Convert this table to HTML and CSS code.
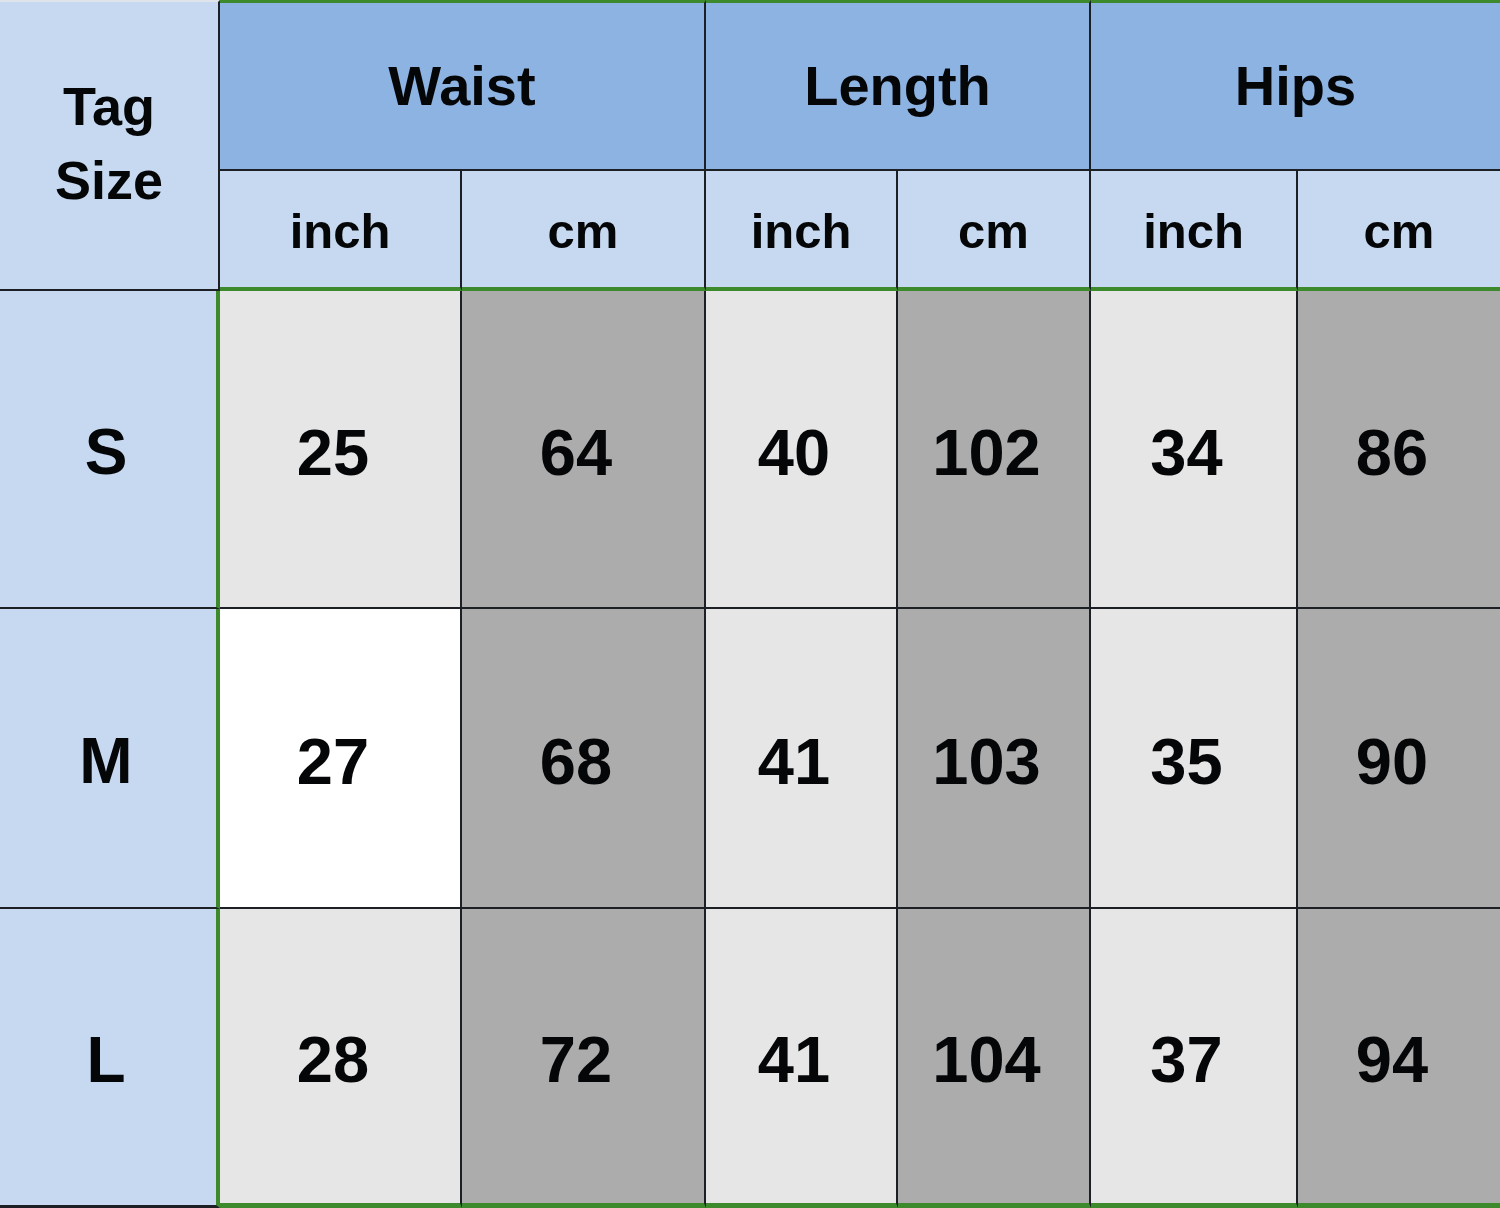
FILE: index.html
```html
<!DOCTYPE html>
<html>
<head>
<meta charset="utf-8">
<link rel="stylesheet" href="styles.css">
</head>
<body>
<div class="chart">
  <div class="cell tag">Tag<br>Size</div>
  <div class="cell group span2">Waist</div>
  <div class="cell group span2">Length</div>
  <div class="cell group span2 last">Hips</div>

  <div class="cell unit">inch</div>
  <div class="cell unit">cm</div>
  <div class="cell unit">inch</div>
  <div class="cell unit">cm</div>
  <div class="cell unit">inch</div>
  <div class="cell unit last">cm</div>

  <div class="cell size">S</div>
  <div class="cell num light">25</div>
  <div class="cell num dark">64</div>
  <div class="cell num light">40</div>
  <div class="cell num dark">102</div>
  <div class="cell num light">34</div>
  <div class="cell num dark last">86</div>

  <div class="cell size">M</div>
  <div class="cell num white">27</div>
  <div class="cell num dark">68</div>
  <div class="cell num light">41</div>
  <div class="cell num dark">103</div>
  <div class="cell num light">35</div>
  <div class="cell num dark last">90</div>

  <div class="cell size bottom">L</div>
  <div class="cell num light bottom">28</div>
  <div class="cell num dark bottom">72</div>
  <div class="cell num light bottom">41</div>
  <div class="cell num dark bottom">104</div>
  <div class="cell num light bottom">37</div>
  <div class="cell num dark bottom last">94</div>
</div>
</body>
</html>
```

FILE: styles.css
```css
html, body {
  margin: 0;
  padding: 0;
  background: #ffffff;
}

.chart {
  width: 1500px;
  height: 1208px;
  display: grid;
  grid-template-columns: 220px 242px 244px 192px 193px 207px 202px;
  grid-template-rows: 171px 120px 318px 300px 299px;
  font-family: "Liberation Sans", Arial, sans-serif;
  font-weight: bold;
  color: #050608;
  overflow: hidden;
}

.cell {
  box-sizing: border-box;
  display: flex;
  align-items: center;
  justify-content: center;
  text-align: center;
  border-right: 2px solid #1c1f24;
  border-bottom: 2px solid #1c1f24;
}

.cell.last {
  border-right: none;
}

.tag {
  grid-row: 1 / 3;
  grid-column: 1;
  background: #c6d9f0;
  font-size: 54px;
  line-height: 74px;
  border-top: 2px solid #dfe4ea;
  padding-bottom: 6px;
}

.group {
  background: #8db3e2;
  font-size: 56px;
  border-top: 3px solid #3d8a2d;
  padding-bottom: 2px;
}

.span2 {
  grid-column: span 2;
}

.unit {
  background: #c6d9f0;
  font-size: 49px;
  border-bottom: 4px solid #3d8a2d;
  padding-top: 4px;
}

.size {
  background: #c6d9f0;
  font-size: 64px;
  border-right: 4px solid #3d8a2d;
  padding-right: 4px;
  padding-top: 6px;
}

.num {
  font-size: 65px;
  padding-right: 14px;
  padding-top: 6px;
}

.light {
  background: #e6e6e6;
}

.dark {
  background: #acacac;
}

.white {
  background: #ffffff;
}

.num.bottom {
  border-bottom: 5px solid #3d8a2d;
}

.size.bottom {
  border-bottom: 3px solid #1c1f24;
}
```
